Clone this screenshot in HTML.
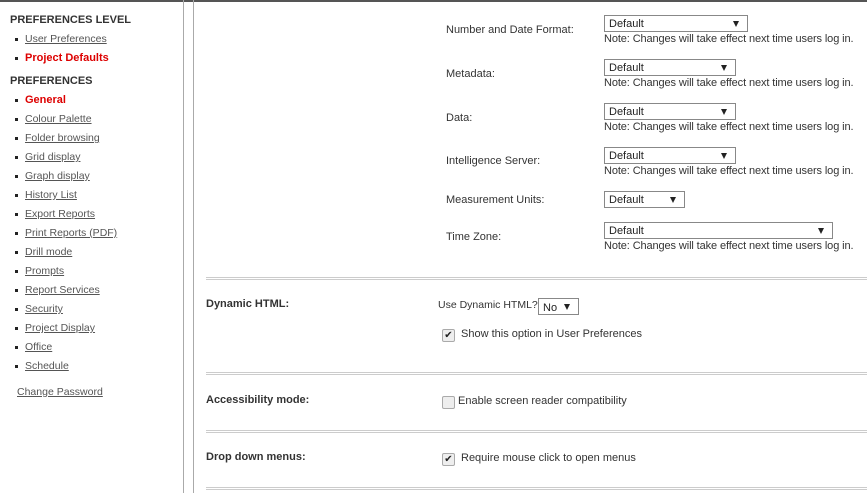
<!DOCTYPE html>
<html><head><style>
body{margin:0;width:867px;height:493px;overflow:hidden;background:#fff;font-family:"Liberation Sans",Arial,sans-serif;font-size:11px;color:#333;position:relative}
.a{position:absolute;white-space:nowrap;line-height:14px}
.n{letter-spacing:-0.11px}
.h{font-weight:bold;font-size:11px;color:#333;left:10px}
.l{left:25px;color:#555;text-decoration:underline;font-size:10.5px}
.r{left:25px;color:#d00;font-weight:bold;font-size:11px}
.b{position:absolute;left:15px;width:3px;height:3px;background:#222}
.sel{position:absolute;height:17px;border:1px solid #888;background:#fff;box-sizing:border-box;line-height:16px;padding-left:4px;color:#222}
.sel:after{content:"";position:absolute;right:8px;top:5px;border-left:3.5px solid transparent;border-right:3.5px solid transparent;border-top:6px solid #222}
.sep{position:absolute;left:206px;right:0;height:1px;border-top:1px solid #ccc;border-bottom:1px solid #ccc}
.cb{position:absolute;width:11px;height:11px;border:1px solid #aaa;border-radius:2px;background:#eee;font-size:10px;line-height:11px;text-align:center;color:#222}
.bl{font-weight:bold;left:206px}
</style></head><body>
<div style="position:absolute;left:0;top:0;width:867px;height:2px;background:#555"></div>
<div style="position:absolute;left:183px;top:0;width:1px;height:493px;background:#aaa"></div>
<div style="position:absolute;left:193px;top:0;width:1px;height:493px;background:#aaa"></div>

<div class="a h" style="top:13px">PREFERENCES LEVEL</div>
<div class="b" style="top:38px"></div><div class="a l" style="top:32px">User Preferences</div>
<div class="b" style="top:57px"></div><div class="a r" style="top:51px">Project Defaults</div>
<div class="a h" style="top:74px">PREFERENCES</div>
<div class="b" style="top:99px"></div><div class="a r" style="top:93px">General</div>
<div class="b" style="top:118px"></div><div class="a l" style="top:112px">Colour Palette</div>
<div class="b" style="top:137px"></div><div class="a l" style="top:131px">Folder browsing</div>
<div class="b" style="top:156px"></div><div class="a l" style="top:150px">Grid display</div>
<div class="b" style="top:175px"></div><div class="a l" style="top:169px">Graph display</div>
<div class="b" style="top:194px"></div><div class="a l" style="top:188px">History List</div>
<div class="b" style="top:213px"></div><div class="a l" style="top:207px">Export Reports</div>
<div class="b" style="top:232px"></div><div class="a l" style="top:226px">Print Reports (PDF)</div>
<div class="b" style="top:251px"></div><div class="a l" style="top:245px">Drill mode</div>
<div class="b" style="top:270px"></div><div class="a l" style="top:264px">Prompts</div>
<div class="b" style="top:289px"></div><div class="a l" style="top:283px">Report Services</div>
<div class="b" style="top:308px"></div><div class="a l" style="top:302px">Security</div>
<div class="b" style="top:327px"></div><div class="a l" style="top:321px">Project Display</div>
<div class="b" style="top:346px"></div><div class="a l" style="top:340px">Office</div>
<div class="b" style="top:365px"></div><div class="a l" style="top:359px">Schedule</div>
<div class="a l" style="left:17px;top:385px">Change Password</div>

<div class="a" style="left:446px;top:23px">Number and Date Format:</div>
<div class="sel" style="left:604px;top:15px;width:144px">Default</div>
<div class="a n" style="left:604px;top:32px">Note: Changes will take effect next time users log in.</div>
<div class="a" style="left:446px;top:67px">Metadata:</div>
<div class="sel" style="left:604px;top:59px;width:132px">Default</div>
<div class="a n" style="left:604px;top:76px">Note: Changes will take effect next time users log in.</div>
<div class="a" style="left:446px;top:111px">Data:</div>
<div class="sel" style="left:604px;top:103px;width:132px">Default</div>
<div class="a n" style="left:604px;top:120px">Note: Changes will take effect next time users log in.</div>
<div class="a" style="left:446px;top:154px">Intelligence Server:</div>
<div class="sel" style="left:604px;top:147px;width:132px">Default</div>
<div class="a n" style="left:604px;top:164px">Note: Changes will take effect next time users log in.</div>
<div class="a" style="left:446px;top:193px">Measurement Units:</div>
<div class="sel" style="left:604px;top:191px;width:81px">Default</div>
<div class="a" style="left:446px;top:230px">Time Zone:</div>
<div class="sel" style="left:604px;top:222px;width:229px">Default</div>
<div class="a n" style="left:604px;top:239px">Note: Changes will take effect next time users log in.</div>

<div class="sep" style="top:277px"></div>
<div class="a bl" style="top:297px">Dynamic HTML:</div>
<div class="a" style="left:438px;top:298px;font-size:10.5px">Use Dynamic HTML?</div>
<div class="sel" style="left:538px;top:298px;width:41px;padding-top:1px">No</div>
<div class="cb" style="left:442px;top:329px">✔</div>
<div class="a" style="left:461px;top:327px">Show this option in User Preferences</div>

<div class="sep" style="top:372px"></div>
<div class="a bl" style="top:393px">Accessibility mode:</div>
<div class="cb" style="left:442px;top:396px"></div>
<div class="a" style="left:458px;top:394px">Enable screen reader compatibility</div>

<div class="sep" style="top:430px"></div>
<div class="a bl" style="top:450px">Drop down menus:</div>
<div class="cb" style="left:442px;top:453px">✔</div>
<div class="a" style="left:461px;top:451px">Require mouse click to open menus</div>
<div class="sep" style="top:487px"></div>
</body></html>
